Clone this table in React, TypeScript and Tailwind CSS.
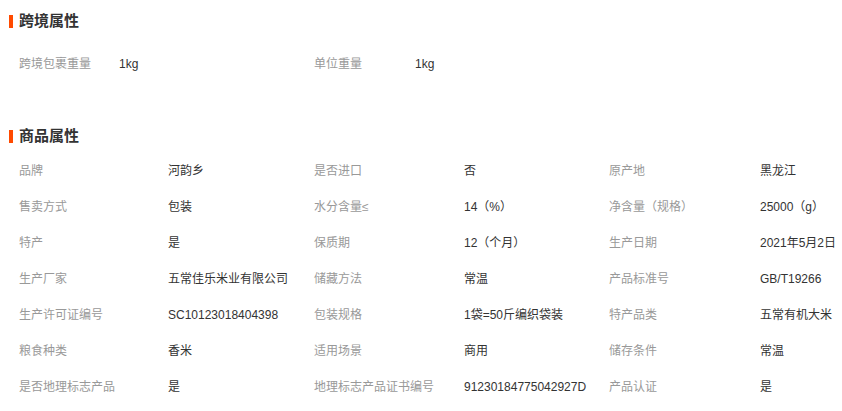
const cross: [string, string][] = [
  ["跨境包裹重量", "1kg"],
  ["单位重量", "1kg"],
];

const attrs: [string, string][] = [
  ["品牌", "河韵乡"],
  ["是否进口", "否"],
  ["原产地", "黑龙江"],
  ["售卖方式", "包装"],
  ["水分含量≤", "14（%）"],
  ["净含量（规格）", "25000（g）"],
  ["特产", "是"],
  ["保质期", "12（个月）"],
  ["生产日期", "2021年5月2日"],
  ["生产厂家", "五常佳乐米业有限公司"],
  ["储藏方法", "常温"],
  ["产品标准号", "GB/T19266"],
  ["生产许可证编号", "SC10123018404398"],
  ["包装规格", "1袋=50斤编织袋装"],
  ["特产品类", "五常有机大米"],
  ["粮食种类", "香米"],
  ["适用场景", "商用"],
  ["储存条件", "常温"],
  ["是否地理标志产品", "是"],
  ["地理标志产品证书编号", "91230184775042927D"],
  ["产品认证", "是"],
];

function Heading({ title }: { title: string }) {
  return (
    <div className="h-[30px] flex items-center">
      <span className="w-[4px] h-[13px] bg-[#ff4a00] ml-[9px] mr-[6px]" />
      <h3 className="text-[15px] font-bold text-[#333]">{title}</h3>
    </div>
  );
}

function Cell({ label, value }: { label: string; value: string }) {
  return (
    <>
      <div className="h-[36px] flex items-center text-[#999] whitespace-nowrap">{label}</div>
      <div className="h-[36px] flex items-center text-[#333] whitespace-nowrap">{value}</div>
    </>
  );
}

export default function App() {
  return (
    <div
      className="w-[842px] h-[411px] bg-white text-[12px] overflow-hidden pt-[6px]"
      style={{ fontFamily: '"Liberation Sans", "Noto Sans CJK SC", sans-serif' }}
    >
      <Heading title="跨境属性" />
      <div className="grid grid-cols-[100px_195px_101px_1fr] pl-[19px] mt-[10px]">
        {cross.map(([l, v]) => (
          <Cell key={l} label={l} value={v} />
        ))}
      </div>

      <div className="mt-[39px]">
        <Heading title="商品属性" />
      </div>
      <div className="grid grid-cols-[149px_146px_150px_145px_151px_1fr] pl-[19px] mt-[2px]">
        {attrs.map(([l, v]) => (
          <Cell key={l} label={l} value={v} />
        ))}
      </div>
    </div>
  );
}
